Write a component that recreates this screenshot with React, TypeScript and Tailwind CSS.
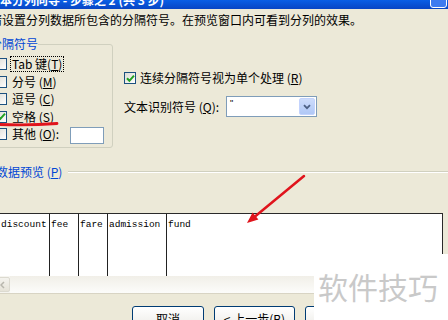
import React from "react";

function Box({ checked }: { checked?: boolean }) {
  return (
    <span className="w-[12px] h-[12px] shrink-0 border border-[#1c5180] bg-linear-to-br from-[#dcdcd5] to-white flex items-center justify-center">
      {checked && (
        <svg width="9" height="9" viewBox="0 0 9 9">
          <path d="M1 4.2 L3.4 6.8 L8 1.6" fill="none" stroke="#21a121" strokeWidth="2" />
        </svg>
      )}
    </span>
  );
}

function Row({ children, focus, checked }: { children: React.ReactNode; focus?: boolean; checked?: boolean }) {
  return (
    <div className="h-[17.5px] pl-[8px] flex items-center gap-[3px]">
      <Box checked={checked} />
      <span
        className={
          focus
            ? "h-[16px] px-[1px] border border-dotted border-black leading-[14px] whitespace-nowrap"
            : "h-[16px] px-[1px] border border-transparent leading-[14px] whitespace-nowrap"
        }
      >
        {children}
      </span>
    </div>
  );
}

export default function App() {
  return (
    <div className="relative w-[448px] h-[320px] overflow-hidden bg-[#ece9d8] text-[12px] leading-[14px] text-black font-['Noto_Sans_CJK_SC',sans-serif]">
      {/* title bar */}
      <div className="h-[9px] overflow-hidden bg-linear-to-b from-[#0a5fe6] to-[#0845c4] flex">
        <div className="-mt-[7px] ml-[-12px] text-white font-bold leading-[14px] whitespace-nowrap">
          文本分列向导 - 步骤之 2 (共 3 步)
        </div>
        <div className="ml-auto mr-[1px] -mt-[9px] w-[17px] h-[17px] rounded-[3px] border border-white bg-[#3d7bf0]" />
      </div>

      {/* instruction */}
      <div className="mt-[4px] ml-[-10px] whitespace-nowrap">
        请设置分列数据所包含的分隔符号。在预览窗口内可看到分列的效果。
      </div>

      {/* middle */}
      <div className="mt-[10px] flex items-start">
        <div className="ml-[-14px] mt-[7px] w-[127px] h-[104px] border border-[#d0d0bf] rounded-[3px] flex flex-col">
          <div className="-mt-[8px] ml-[3px] w-fit bg-[#ece9d8] text-[#0046d5] leading-[14px] whitespace-nowrap">分隔符号</div>
          <div className="mt-[4.25px] flex flex-col">
            <Row focus>
              Tab 键(<u>T</u>)
            </Row>
            <Row>
              分号 (<u>M</u>)
            </Row>
            <Row>
              逗号 (<u>C</u>)
            </Row>
            <Row checked>
              空格 (<u>S</u>)
            </Row>
            <div className="h-[17.5px] pl-[8px] flex items-center gap-[3px]">
              <Box />
              <span className="h-[16px] px-[1px] border border-transparent leading-[14px] whitespace-nowrap">
                其他 (<u>O</u>):
              </span>
              <span className="ml-[6px] mt-[2px] w-[34px] h-[17px] border border-[#7f9db9] bg-white shrink-0" />
            </div>
          </div>
        </div>

        <div className="ml-[11px] flex flex-col">
          <div className="mt-[34.5px] h-[13px] flex items-center gap-[4px]">
            <Box checked />
            <span className="whitespace-nowrap">
              连续分隔符号视为单个处理 (<u>R</u>)
            </span>
          </div>
          <div className="mt-[11.5px] h-[21px] flex items-center">
            <span className="w-[102px] whitespace-nowrap">
              文本识别符号 (<u>Q</u>):
            </span>
            <div className="w-[91px] h-[21px] border border-[#7f9db9] bg-white flex items-stretch">
              <span className="pl-[3px] text-[9px] leading-[12px] font-['Liberation_Sans',sans-serif]">"</span>
              <div className="ml-auto my-[1px] mr-[1px] w-[16px] rounded-[2px] bg-linear-to-b from-[#cddcfb] to-[#b0c8f6] border border-[#c3d3fd] flex items-center justify-center">
                <svg width="8" height="6" viewBox="0 0 8 6">
                  <path d="M1 1.2 L4 4.2 L7 1.2" fill="none" stroke="#4d6185" strokeWidth="1.8" />
                </svg>
              </div>
            </div>
          </div>
        </div>
      </div>

      {/* preview label */}
      <div className="mt-[17px] h-[14px] flex items-center">
        <span className="ml-[-4px] text-[#0046d5] whitespace-nowrap">
          数据预览 (<u>P</u>)
        </span>
        <div className="ml-[6px] flex-1 flex flex-col">
          <div className="h-px bg-[#d0d0bf]" />
          <div className="h-px bg-white" />
        </div>
      </div>

      {/* preview box */}
      <div className="mt-[34px] ml-[-10px] w-[453px] border border-[#2a2a2a] border-b-[#d8d4c4] flex flex-col">
        <div className="h-[62px] bg-white flex font-['Liberation_Mono',monospace] text-[9.5px] leading-[12px]">
          <div className="w-[59px] border-r border-[#222] pl-[10px] pt-[5px]">discount</div>
          <div className="w-[29px] border-r border-[#222] pl-[1px] pt-[5px]">fee</div>
          <div className="w-[29px] border-r border-[#222] pl-[1px] pt-[5px]">fare</div>
          <div className="w-[59px] border-r border-[#222] pl-[1px] pt-[5px]">admission</div>
          <div className="flex-1 pl-[1px] pt-[5px]">fund</div>
        </div>
        <div className="h-[17px] flex bg-[#f6f5f0]">
          <div className="w-[19px] h-[15px] mt-[1px] rounded-[2px] border border-[#dcdad0] bg-linear-to-b from-[#f4f3ee] to-[#e6e3d8] flex items-center justify-end pr-[4px]">
            <svg width="5" height="8" viewBox="0 0 5 8">
              <path d="M4 1 L1 4 L4 7" fill="none" stroke="#b8b6ad" strokeWidth="1.5" />
            </svg>
          </div>
          <div className="flex-1 bg-linear-to-b from-[#f1efe8] to-[#fcfcfa]" />
        </div>
      </div>

      {/* buttons */}
      <div className="mt-[12px] ml-[132px] flex gap-[10px]">
        <div className="w-[72px] h-[23px] shrink-0 rounded-[3px] border border-[#003c74] bg-linear-to-b from-white to-[#ecebe6] flex justify-center pt-[5px]">取消</div>
        <div className="w-[81px] h-[23px] shrink-0 rounded-[3px] border border-[#003c74] bg-linear-to-b from-white to-[#ecebe6] flex justify-center pt-[5px] whitespace-nowrap">
          &lt; 上一步(<u>B</u>)
        </div>
        <div className="w-[81px] h-[23px] shrink-0 rounded-[3px] border border-[#003c74] bg-linear-to-b from-white to-[#ecebe6]" />
      </div>

      {/* annotations */}
      <svg className="absolute left-0 top-0 pointer-events-none" width="448" height="320" viewBox="0 0 448 320">
        <path d="M0 124.5 Q30 125.5 57 123.5" fill="none" stroke="#e0141c" strokeWidth="2.8" strokeLinecap="round" />
        <line x1="304" y1="176" x2="255" y2="216.5" stroke="#e0141c" strokeWidth="2.5" strokeLinecap="round" />
        <polygon points="247,223 258.4,219.5 252.6,212.5" fill="#e0141c" />
      </svg>

      {/* watermark */}
      <div className="absolute left-[314px] top-[254px] right-0 bottom-0 bg-white pl-[4px] pt-[17px]">
        <div className="text-[30px] leading-[30px] text-[#c9c9c9] whitespace-nowrap">软件技巧</div>
      </div>
    </div>
  );
}
